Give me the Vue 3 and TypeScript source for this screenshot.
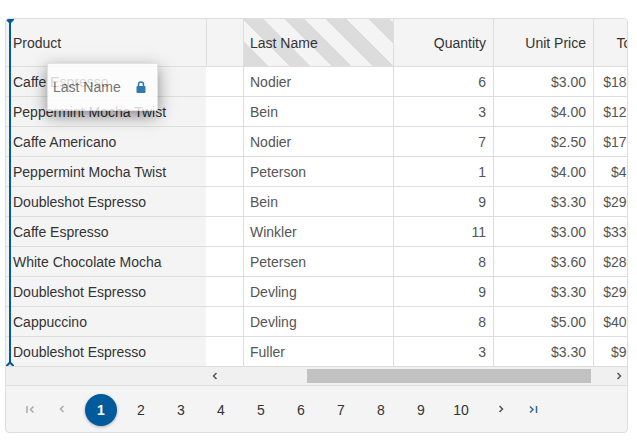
<script setup lang="ts">
import { ref } from 'vue'

interface OrderRow {
  product: string
  lastName: string
  quantity: number
  price: number
}

const rows: OrderRow[] = [
  { product: 'Caffe Espresso', lastName: 'Nodier', quantity: 6, price: 3 },
  { product: 'Peppermint Mocha Twist', lastName: 'Bein', quantity: 3, price: 4 },
  { product: 'Caffe Americano', lastName: 'Nodier', quantity: 7, price: 2.5 },
  { product: 'Peppermint Mocha Twist', lastName: 'Peterson', quantity: 1, price: 4 },
  { product: 'Doubleshot Espresso', lastName: 'Bein', quantity: 9, price: 3.3 },
  { product: 'Caffe Espresso', lastName: 'Winkler', quantity: 11, price: 3 },
  { product: 'White Chocolate Mocha', lastName: 'Petersen', quantity: 8, price: 3.6 },
  { product: 'Doubleshot Espresso', lastName: 'Devling', quantity: 9, price: 3.3 },
  { product: 'Cappuccino', lastName: 'Devling', quantity: 8, price: 5 },
  { product: 'Doubleshot Espresso', lastName: 'Fuller', quantity: 3, price: 3.3 },
]

const pageCount = 10
const page = ref(1)
const money = (value: number): string => '$' + value.toFixed(2)
</script>

<template>
  <div class="grid">
    <div class="viewport">
      <table>
        <colgroup>
          <col class="c-product" />
          <col class="c-blank" />
          <col class="c-name" />
          <col class="c-num" />
          <col class="c-num" />
          <col class="c-total" />
        </colgroup>
        <thead>
          <tr>
            <th scope="col">Product</th>
            <th class="blank"></th>
            <th scope="col" class="dragging">Last Name</th>
            <th scope="col" class="num">Quantity</th>
            <th scope="col" class="num">Unit Price</th>
            <th scope="col" class="num">Total</th>
          </tr>
        </thead>
        <tbody>
          <tr v-for="(row, i) in rows" :key="i">
            <td class="pinned">{{ row.product }}</td>
            <td></td>
            <td>{{ row.lastName }}</td>
            <td class="num">{{ row.quantity }}</td>
            <td class="num">{{ money(row.price) }}</td>
            <td class="num">{{ money(row.price * row.quantity) }}</td>
          </tr>
        </tbody>
      </table>

      <div class="drop-line">
        <svg class="tip" viewBox="0 0 8 4"><path d="M0 0H8V1L5 4H3L0 1Z" /></svg>
        <svg class="tip tip-end" viewBox="0 0 8 4"><path d="M3 0H5L8 3V4H6L4 2L2 4H0V3Z" /></svg>
      </div>

      <div class="drag-cue">
        <span>Last Name</span>
        <svg class="lock" viewBox="0 0 10 12">
          <path class="shackle" d="M2.5 6V3.4a2.5 2.5 0 0 1 5 0V6" />
          <rect x="0.5" y="5" width="9" height="7" rx="1" />
        </svg>
      </div>
    </div>

    <div class="scrollbar">
      <button type="button" class="scroll-btn" aria-label="Scroll left">
        <svg viewBox="0 0 18 18"><path d="M10.5 6L7.5 9l3 3" /></svg>
      </button>
      <div class="track"><div class="thumb"></div></div>
      <button type="button" class="scroll-btn" aria-label="Scroll right">
        <svg viewBox="0 0 18 18"><path d="M8.5 6l3 3l-3 3" /></svg>
      </button>
    </div>

    <nav class="pager" aria-label="Pages">
      <button type="button" class="nav-btn" :disabled="page === 1" aria-label="First page" @click="page = 1">
        <svg viewBox="0 0 32 32"><path d="M14 12v7M20.5 12.5l-3 3l3 3" /></svg>
      </button>
      <button type="button" class="nav-btn" :disabled="page === 1" aria-label="Previous page" @click="page--">
        <svg viewBox="0 0 32 32"><path d="M18.5 12l-3 3l3 3" /></svg>
      </button>
      <div class="pages">
        <button
          v-for="n in pageCount"
          :key="n"
          type="button"
          class="page-btn"
          :class="{ current: n === page }"
          @click="page = n"
        >{{ n }}</button>
      </div>
      <button type="button" class="nav-btn" :disabled="page === pageCount" aria-label="Next page" @click="page++">
        <svg viewBox="0 0 32 32"><path d="M14.5 12l3 3l-3 3" /></svg>
      </button>
      <button type="button" class="nav-btn last" :disabled="page === pageCount" aria-label="Last page" @click="page = pageCount">
        <svg viewBox="0 0 32 32"><path d="M13 12.5l3 3l-3 3M19.5 12v7" /></svg>
      </button>
    </nav>
  </div>
</template>

<style>
body {
  background: #fff;
}
</style>

<style scoped>
.grid {
  margin: 18px 9px 0 5px;
  border: 1px solid #dedede;
  border-radius: 4px;
  overflow: hidden;
  background: #f4f4f4;
  color: #333;
  font-family: "Liberation Sans", Arial, sans-serif;
  font-size: 14px;
  line-height: 20px;
}

.viewport {
  position: relative;
  overflow: hidden;
}

table {
  width: 648px;
  min-width: 100%;
  table-layout: fixed;
  border-collapse: separate;
  border-spacing: 0;
}

.c-product { width: 200px; }
.c-blank { width: 38px; }
.c-name { width: 150px; }
.c-num { width: 100px; }
.c-total { width: 60px; }

th,
td {
  box-sizing: border-box;
  padding: 0 7px 0 6px;
  border-right: 1px solid #dedede;
  border-bottom: 1px solid #dedede;
  text-align: left;
  font-weight: 400;
  white-space: nowrap;
}

th {
  height: 48px;
  background-color: #f4f4f4;
}

td {
  height: 30px;
  background: #fff;
  color: #555;
}

th:first-child,
td:first-child {
  padding-left: 7px;
  border-right: 0;
}

.blank {
  border-left: 1px solid #dedede;
}

td.pinned {
  background: #f4f4f4;
  color: #333;
}

.num {
  text-align: right;
}

.dragging {
  background-image: linear-gradient(45deg, #dcdcdc 0 17px, #f4f4f4 17px 32px, #dcdcdc 32px 47px, #f4f4f4 47px 62px, #dcdcdc 62px 76px, #f4f4f4 76px 91px, #dcdcdc 91px 106px, #f4f4f4 106px 121px, #dcdcdc 121px 136px, #f4f4f4 136px);
}

.drop-line {
  position: absolute;
  top: 0;
  bottom: 3px;
  left: 3px;
  width: 2px;
  background: #005b9c;
}

.tip {
  position: absolute;
  top: 0;
  left: -3px;
  width: 8px;
  height: 4px;
  fill: #005b9c;
}

.tip-end {
  top: auto;
  bottom: -2px;
}

.drag-cue {
  position: absolute;
  top: 44px;
  left: 41px;
  display: flex;
  align-items: center;
  justify-content: space-between;
  box-sizing: border-box;
  width: 111px;
  height: 48px;
  padding: 0 11px 0 5px;
  border: 1px solid #dedede;
  background: #fff;
  box-shadow: 0 5px 15px rgba(0, 0, 0, 0.55);
  opacity: 0.8;
  color: #555;
}

.lock {
  width: 10px;
  height: 12px;
  fill: #005b9c;
}

.shackle {
  fill: none;
  stroke: #005b9c;
  stroke-width: 1.5;
}

.scrollbar {
  display: flex;
  align-items: center;
  height: 18px;
  padding-left: 200px;
  border-bottom: 1px solid #dedede;
  background: #f0f0f0;
}

.track {
  flex: 1;
  display: flex;
  padding-right: 18px;
}

.track::before {
  content: "";
  flex: 83;
}

.thumb {
  flex: 284;
  height: 14px;
  background: #c1c1c1;
}

button {
  padding: 0;
  border: 0;
  background: none;
  color: inherit;
  font: inherit;
}

svg {
  display: block;
}

.scroll-btn,
.scroll-btn svg {
  width: 18px;
  height: 18px;
}

.scroll-btn path,
.nav-btn path {
  fill: none;
  stroke: #555;
  stroke-width: 1.5;
}

.pager {
  display: flex;
  align-items: center;
  padding: 8px 7px 6px;
}

.nav-btn,
.nav-btn svg,
.page-btn {
  flex: none;
  width: 32px;
  height: 32px;
}

.nav-btn:disabled path {
  stroke: #aaa;
}

.nav-btn.last path {
  stroke: #356a94;
}

.pages {
  display: flex;
  gap: 8px;
  padding: 0 8px;
}

.page-btn {
  border-radius: 50%;
}

.page-btn.current {
  background: #005b9c;
  box-shadow: 0 1px 3px rgba(0, 0, 0, 0.3);
  color: #fff;
  font-weight: 700;
}
</style>
